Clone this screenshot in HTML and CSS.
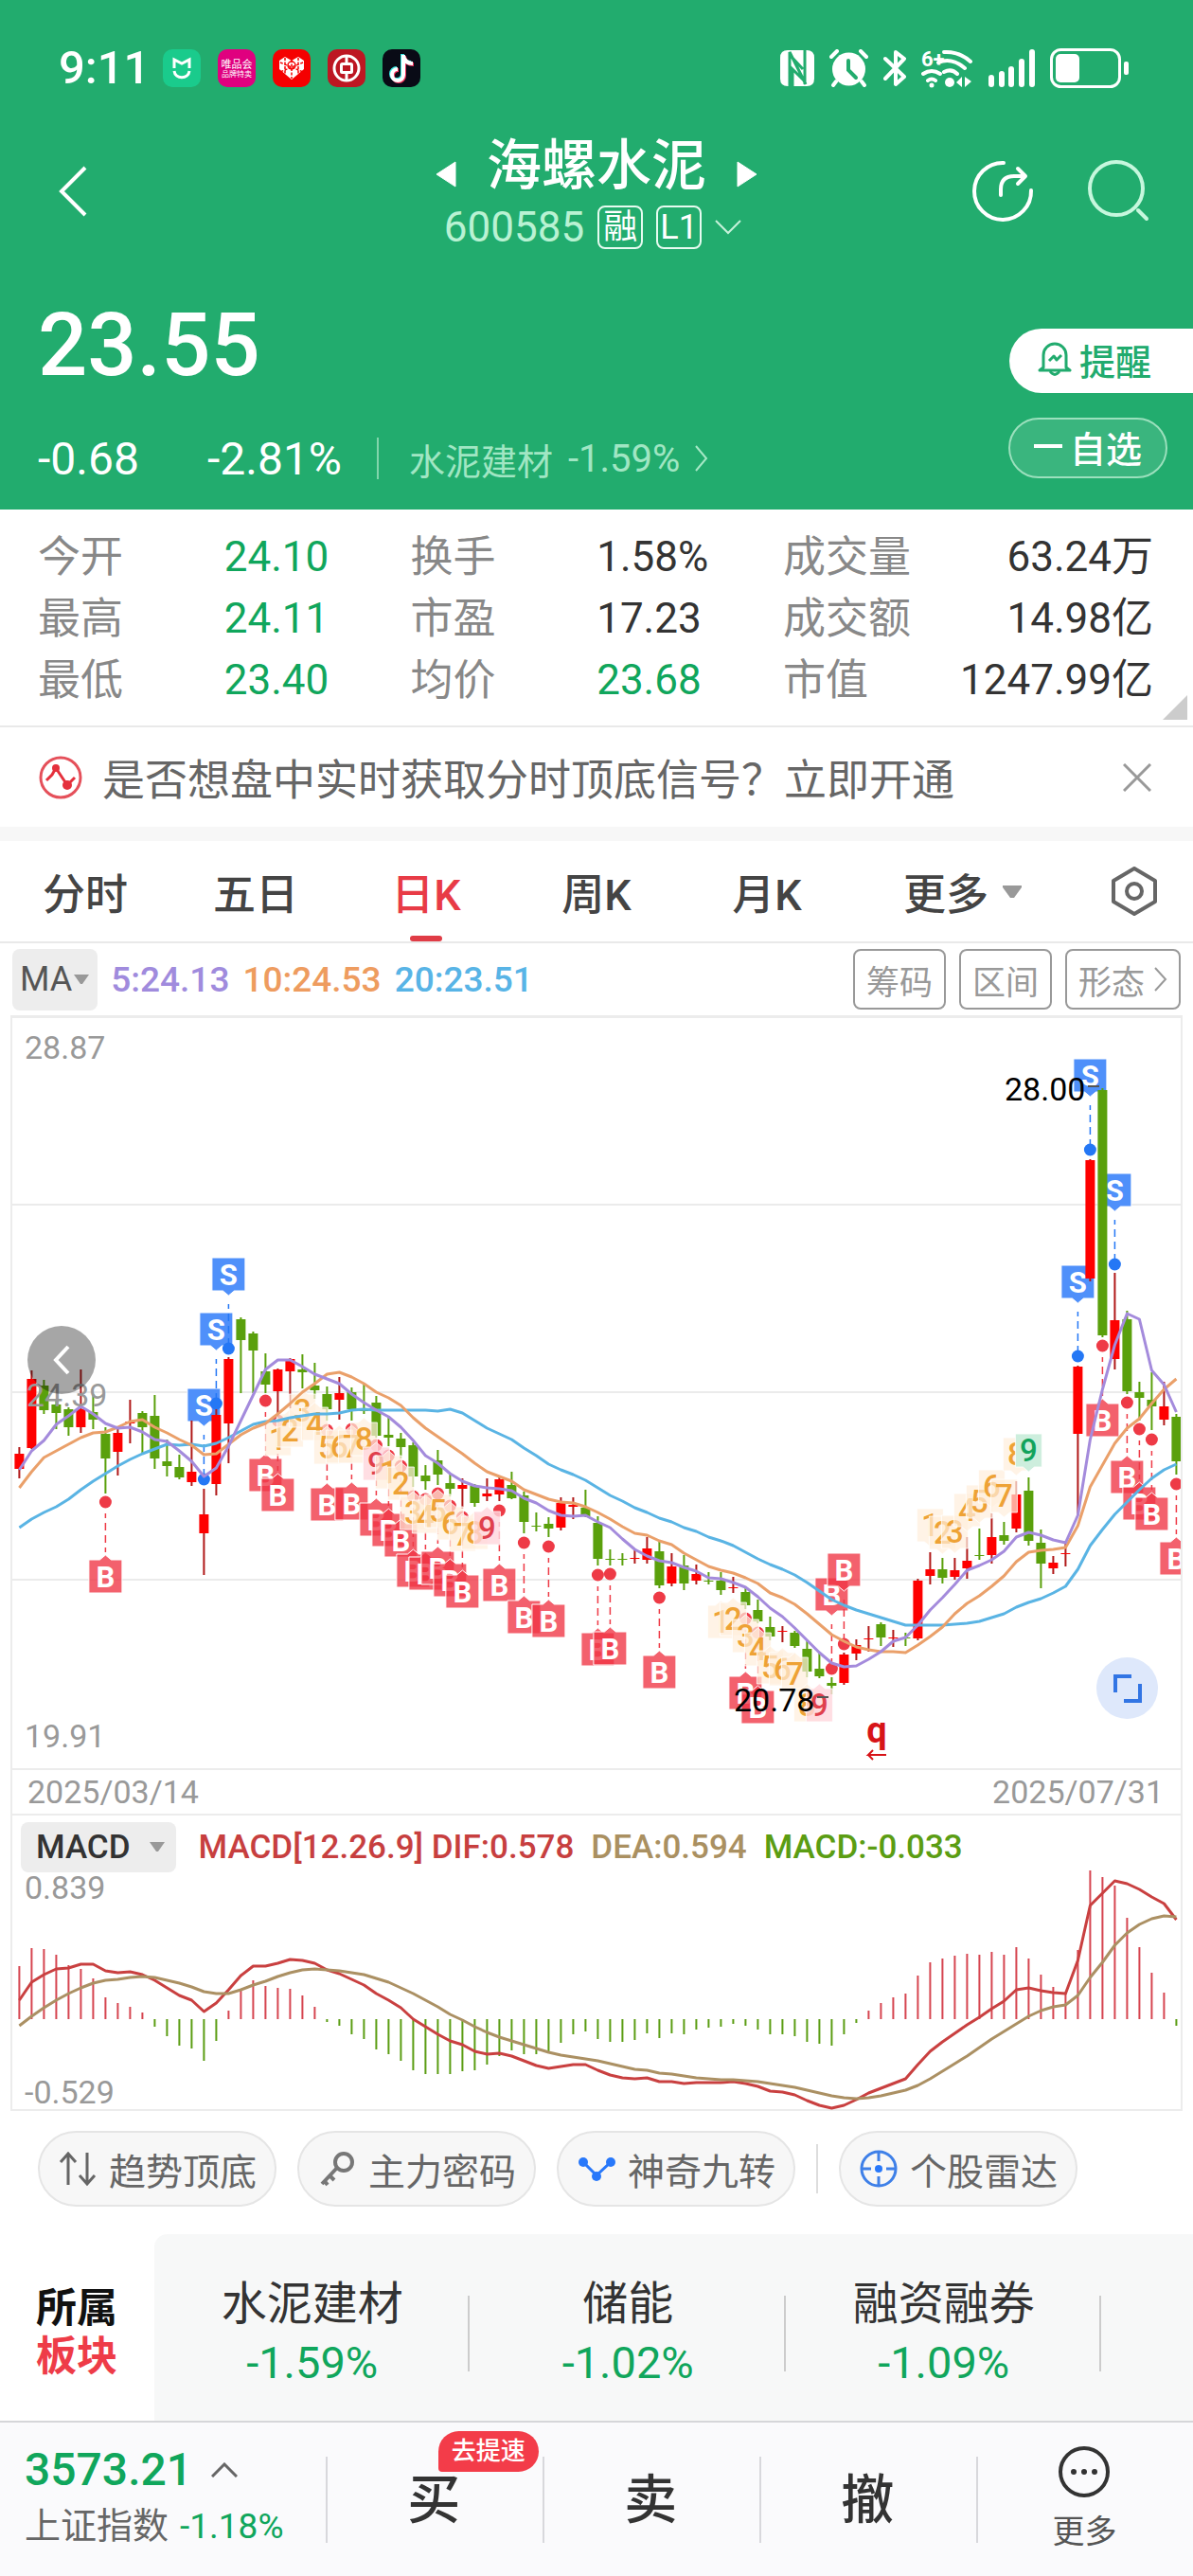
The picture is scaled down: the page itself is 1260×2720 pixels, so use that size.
FILE: index.html
```
<!DOCTYPE html>
<html lang="zh-CN">
<head>
	<meta charset="UTF-8">
	<meta name="viewport" content="width=device-width,initial-scale=1.0">
	<title>海螺水泥 600585</title>
	<link rel="stylesheet" href="styles.css">
</head>
<body>
	<header class="top">
		<div class="status">
			<span class="clock">9:11</span>
			<div class="apps">
				<svg class="app" viewBox="0 0 40 40"><rect width="40" height="40" rx="10" fill="#1acb8c"/><path d="M12 20V11l8 4 8-4v9M12 23c1 9 15 9 16 0" fill="none" stroke="#fff" stroke-width="3"/></svg>
				<svg class="app" viewBox="0 0 40 40"><rect width="40" height="40" rx="10" fill="#e0007f"/><text x="20" y="20" class="app-t1">唯品会</text><text x="20" y="29" class="app-t2">品牌特卖</text></svg>
				<svg class="app" viewBox="0 0 40 40"><rect width="40" height="40" rx="10" fill="#f50000"/><path d="M20 32L7 21V12l6-4 7 4 7-4 6 4v9z" fill="#fff"/><path d="M20 11v20M8 14l24 10M32 14L8 24M13 9v17M27 9v17" stroke="#f50000" stroke-width="1.5" stroke-dasharray="3 1.5"/><circle cx="20" cy="17" r="4" fill="none" stroke="#f50000" stroke-width="1.5"/></svg>
				<svg class="app" viewBox="0 0 40 40"><rect width="40" height="40" rx="10" fill="#bd1622"/><circle cx="20" cy="20" r="13" fill="none" stroke="#fff" stroke-width="3"/><rect x="14.500" y="15.500" width="11" height="9" rx="1" fill="none" stroke="#fff" stroke-width="3"/><path d="M20 7v8M20 25v8" stroke="#fff" stroke-width="3"/></svg>
				<svg class="app" viewBox="0 0 40 40"><rect width="40" height="40" rx="10" fill="#090b16"/><path d="M21 5v21a6 6 0 1 1-6-6M21 6c1 5 4 8 9 8" fill="none" stroke="#3be8e4" stroke-width="4"/><path d="M23 7v21a6 6 0 1 1-6-6M23 8c1 5 4 8 10 8" fill="none" stroke="#f0305a" stroke-width="4"/><path d="M22 6v21a6 6 0 1 1-6-6M22 7c1 5 4 8 10 8" fill="none" stroke="#fff" stroke-width="4"/></svg>
			</div>
			<div class="signals">
				<svg width="36" height="38" viewBox="0 0 36 38"><path d="M8 0h20q8 0 8 8v22q0 8-8 8H8q-8 0-8-8V8q0-8 8-8z" fill="#fff"/><path d="M10 38V2l17 34M26 0v36M13 38V20l13 13M24 20L11 6" fill="none" stroke="#22ac6e" stroke-width="3"/></svg>
				<svg width="41" height="40" viewBox="0 0 41 40"><circle cx="20.500" cy="21" r="17.500" fill="#fff"/><path d="M7 34l-3 4M34 34l3 4M2 8l6-6M39 8l-6-6" stroke="#fff" stroke-width="4" stroke-linecap="round"/><path d="M20 12v10l8 8" fill="none" stroke="#22ac6e" stroke-width="4" stroke-linecap="round"/></svg>
				<svg width="24" height="40" viewBox="0 0 24 40"><path d="M2 10l20 19-9 8V3l9 7L2 31" fill="none" stroke="#fff" stroke-width="4" stroke-linejoin="round" stroke-linecap="round"/></svg>
				<svg width="55" height="42" viewBox="0 0 55 42"><text x="0" y="19" class="wifi-gen">6+</text><g fill="none" stroke="#fff" stroke-width="4" stroke-linecap="round"><path d="M24 4q16-1 28 10M18 15q14-6 28 6M2 27q9-6 18 0M24 25q8-4 14 2M7 34q4-3 8 0"/></g><g fill="#fff"><circle cx="11" cy="39" r="2.500"/><circle cx="30" cy="36" r="5"/><path d="M37 36l6-6v11zM46 30l7 5-7 6z"/></g></svg>
				<svg width="49" height="40" viewBox="0 0 49 40"><path d="M3 30v7M14 26v11M24 21v16M35 13v24M46 3v34" stroke="#fff" stroke-width="6" stroke-linecap="round"/></svg>
				<svg width="83" height="42" viewBox="0 0 83 42"><rect x="1.500" y="1.500" width="72" height="39" rx="10" fill="none" stroke="#fff" stroke-width="3"/><rect x="6" y="6" width="25" height="30" rx="5" fill="#fff"/><rect x="78" y="14" width="5" height="14" rx="2" fill="#fff"/></svg>
			</div>
		</div>

		<nav class="nav">
			<button class="icon-btn back" aria-label="返回"><svg width="30" height="54" viewBox="0 0 30 54"><path d="M28 2L3 27l25 25" fill="none" stroke="#fff" stroke-width="4"/></svg></button>
			<div class="title">
				<div class="name-row">
					<button class="icon-btn" aria-label="上一只"><svg width="22" height="30" viewBox="0 0 22 30"><path d="M21 2v26L1 15z" fill="#fff" stroke="#fff" stroke-linejoin="round"/></svg></button>
					<h1>海螺水泥</h1>
					<button class="icon-btn" aria-label="下一只"><svg width="22" height="30" viewBox="0 0 22 30"><path d="M1 2v26l20-13z" fill="#fff" stroke="#fff" stroke-linejoin="round"/></svg></button>
				</div>
				<div class="code-row">
					<span class="code">600585</span>
					<span class="tag">融</span>
					<span class="tag">L1</span>
					<svg width="28" height="16" viewBox="0 0 28 16"><path d="M1 1l13 13L27 1" fill="none" stroke="#c6f2da" stroke-width="2"/></svg>
				</div>
			</div>
			<div class="nav-right">
				<button class="icon-btn" aria-label="分享"><svg width="66" height="66" viewBox="0 0 66 66"><g fill="none" stroke="#fff" stroke-width="4" stroke-linecap="round" stroke-linejoin="round"><path d="M34 3a30 30 0 1 0 29 29"/><path d="M31 37v-6q0-14 14-14h11M49 9l8 8-8 8"/></g></svg></button>
				<button class="icon-btn" aria-label="搜索"><svg width="66" height="66" viewBox="0 0 66 66"><g fill="none" stroke="#c6f7dd" stroke-width="4" stroke-linecap="round"><circle cx="31" cy="30" r="28"/><path d="M54 53l9 9"/></g></svg></button>
			</div>
		</nav>

		<div class="quote">
			<div>
				<div class="price">23.55</div>
				<div class="change">
					<span class="diff">-0.68</span>
					<span class="pct">-2.81%</span>
					<a class="industry" href="#">水泥建材 <span>-1.59%</span><svg width="14" height="28" viewBox="0 0 14 28"><path d="M1 1l11 13L1 27" fill="none" stroke="#a6e8c6" stroke-width="2"/></svg></a>
				</div>
			</div>
			<div class="actions">
				<button class="remind"><svg width="36" height="38" viewBox="0 0 36 38"><g fill="none" stroke="#21ab6e" stroke-width="3" stroke-linejoin="round"><path d="M6 28V15a12 12 0 0 1 24 0v13l4 3H2z"/><path d="M13 32q5 7 10 0M12 21l5-5 3 4 5-5"/></g></svg>提醒</button>
				<button class="fav"><i></i>自选</button>
			</div>
		</div>
	</header>

	<section class="stats">
		<table>
			<tr><th>今开</th><td class="down">24.10</td><th>换手</th><td>1.58%</td><th>成交量</th><td>63.24万</td></tr>
			<tr><th>最高</th><td class="down">24.11</td><th>市盈</th><td>17.23</td><th>成交额</th><td>14.98亿</td></tr>
			<tr><th>最低</th><td class="down">23.40</td><th>均价</th><td class="down">23.68</td><th>市值</th><td>1247.99亿</td></tr>
		</table>
	</section>

	<div class="notice">
		<svg width="48" height="48" viewBox="0 0 48 48"><circle cx="24" cy="24" r="21" fill="none" stroke="#e5505a" stroke-width="3"/><path d="M9 27l6-6 4-7 12 18 8-8" fill="none" stroke="#e5303c" stroke-width="3"/><circle cx="19" cy="14" r="4" fill="#e5303c"/><circle cx="31" cy="32" r="5" fill="#e5303c"/></svg>
		<a href="#">是否想盘中实时获取分时顶底信号？立即开通</a>
		<button class="icon-btn" aria-label="关闭"><svg width="30" height="30" viewBox="0 0 30 30"><path d="M1 1l28 28M29 1L1 29" stroke="#999" stroke-width="3"/></svg></button>
	</div>

	<div class="tabs">
		<button>分时</button>
		<button>五日</button>
		<button class="on">日K</button>
		<button>周K</button>
		<button>月K</button>
		<button>更多<svg width="22" height="15" viewBox="0 0 22 15"><path d="M1 1h20v2L13 14h-4L1 3z" fill="#999"/></svg></button>
		<button aria-label="设置"><svg width="50" height="52" viewBox="0 0 50 52"><g fill="none" stroke="#666" stroke-width="4" stroke-linejoin="round"><path d="M25 2l22 13v22L25 50 3 37V15z"/><circle cx="25" cy="26" r="8"/></g></svg></button>
	</div>

	<div class="ma-bar">
		<button class="pick">MA<svg width="16" height="10" viewBox="0 0 16 10"><path d="M0 0h16L9 10H7z" fill="#999"/></svg></button>
		<span class="ma5">5:24.13</span>
		<span class="ma10">10:24.53</span>
		<span class="ma20">20:23.51</span>
		<div class="tools">
			<button>筹码</button>
			<button>区间</button>
			<button>形态<svg width="14" height="28" viewBox="0 0 14 28"><path d="M1 2l11 12L1 26" fill="none" stroke="#999" stroke-width="2"/></svg></button>
		</div>
	</div>

	<main class="charts">
		<div class="kline">
			<svg id="kline" viewBox="13 1075 1234 792"></svg>
			<button class="fold" aria-label="收起"><svg width="18" height="32" viewBox="0 0 18 32"><path d="M16 2L3 16l13 14" fill="none" stroke="#fff" stroke-width="4"/></svg></button>
			<button class="full" aria-label="全屏"><svg width="32" height="32" viewBox="0 0 32 32"><path d="M3 20V3h17M29 11v18H12" fill="none" stroke="#3275e4" stroke-width="4"/></svg></button>
		</div>
		<div class="dates"><span>2025/03/14</span><span>2025/07/31</span></div>
		<div class="macd-bar">
			<button class="pick">MACD<svg width="16" height="10" viewBox="0 0 16 10"><path d="M0 0h16L9 10H7z" fill="#999"/></svg></button>
			<span class="dif">MACD[12.26.9] DIF:0.578</span>
			<span class="dea">DEA:0.594</span>
			<span class="bar">MACD:-0.033</span>
		</div>
		<svg id="macd" viewBox="13 1977 1234 250"></svg>
	</main>

	<div class="chips">
		<button><svg width="40" height="38" viewBox="0 0 40 38"><path d="M10 36V3M2 12l8-9 8 9M30 2v33M22 26l8 9 8-9" fill="none" stroke="#666" stroke-width="3"/></svg>趋势顶底</button>
		<button><svg width="40" height="38" viewBox="0 0 40 38"><g fill="none" stroke="#777" stroke-width="4"><circle cx="27" cy="12" r="9"/><path d="M20 18L4 35M12 26l5 5M6 31l4 5"/></g></svg>主力密码</button>
		<button><svg width="40" height="38" viewBox="0 0 40 38"><path d="M6 12l14 14L35 12" fill="none" stroke="#2878fa" stroke-width="3"/><g fill="#2878fa"><circle cx="6" cy="12" r="5"/><circle cx="20" cy="27" r="5"/><circle cx="35" cy="12" r="5"/></g></svg>神奇九转</button>
		<i></i>
		<button><svg width="40" height="40" viewBox="0 0 40 40"><circle cx="20" cy="20" r="18" fill="none" stroke="#3f80e8" stroke-width="3"/><path d="M20 2v10M20 28v10M2 20h10M28 20h10" stroke="#3f80e8" stroke-width="3"/><circle cx="20" cy="20" r="4" fill="#2878fa"/></svg>个股雷达</button>
	</div>

	<section class="sectors">
		<h2>所属<br><em>板块</em></h2>
		<div class="list">
			<a href="#">水泥建材<b>-1.59%</b></a>
			<a href="#">储能<b>-1.02%</b></a>
			<a href="#">融资融券<b>-1.09%</b></a>
		</div>
	</section>

	<footer class="bottom">
		<div class="index">
			<div class="idx-val">3573.21<svg width="28" height="16" viewBox="0 0 28 16"><path d="M1 15L14 2l13 13" fill="none" stroke="#666" stroke-width="3"/></svg></div>
			<div class="idx-name">上证指数<span>-1.18%</span></div>
		</div>
		<button>买<span class="badge">去提速</span></button>
		<button>卖</button>
		<button>撤</button>
		<button class="more"><svg width="56" height="56" viewBox="0 0 56 56"><circle cx="28" cy="28" r="25" fill="none" stroke="#333" stroke-width="4"/><g fill="#333"><circle cx="17" cy="28" r="3"/><circle cx="28" cy="28" r="3"/><circle cx="39" cy="28" r="3"/></g></svg>更多</button>
	</footer>
	<script src="chart.js"></script>
</body>
</html>
```
FILE: styles.css
```
*{padding:0;margin:0;box-sizing:border-box;}
body{font-family:Roboto,"Noto Sans CJK SC",sans-serif;font-size:38px;color:#333;background:#fff;}
button{font:inherit;color:inherit;background:none;border:0;}
a{color:inherit;text-decoration:none;}
svg{display:block;flex:none;}
.down{color:#10a65c;}
.icon-btn{display:flex;}

.top{background:#22ac6e;color:#fff;padding-bottom:26px;}
.status{display:flex;align-items:center;padding:48px 68px 0 62px;height:96px;}
.clock{font-size:49px;font-weight:500;line-height:48px;}
.apps{display:flex;gap:18px;margin-left:14px;}
.app{width:40px;height:40px;}
.app-t1{font-size:11px;fill:#fff;text-anchor:middle;}
.app-t2{font-size:8px;fill:#fff;text-anchor:middle;}
.wifi-gen{font-size:22px;font-weight:bold;fill:#fff;}
.signals{display:flex;align-items:center;gap:16px;margin-left:auto;}

.nav{display:grid;grid-template-columns:1fr auto 1fr;align-items:center;padding:46px 46px 0;}
.nav>.icon-btn,.nav-right{padding-bottom:10px;}
.back{padding-left:16px;}
.name-row,.code-row{display:flex;align-items:center;justify-content:center;}
.name-row{gap:32px;}
.name-row .icon-btn{padding-top:18px;}
h1{font-size:58px;font-weight:500;line-height:66px;}
.code-row{gap:14px;height:64px;padding-right:8px;}
.code{font-size:44px;color:#b9f2d3;}
.tag{width:48px;height:46px;border:2px solid #e6fbf0;border-radius:8px;font-size:36px;line-height:42px;text-align:center;}
.nav-right{display:flex;justify-content:flex-end;gap:56px;}

.quote{display:flex;justify-content:space-between;padding:43px 0 0 40px;}
.price{font-size:92px;font-weight:500;line-height:100px;}
.change{display:flex;align-items:center;height:56px;margin-top:41px;font-size:48px;}
.diff{width:179px;}
.pct{width:179px;}
.industry{display:flex;align-items:center;gap:16px;height:44px;padding-left:32px;border-left:2px solid #82d5ac;font-size:38px;color:#a0e6c3;}
.industry span{font-size:40px;}
.actions{display:flex;flex-direction:column;align-items:flex-end;padding-top:32px;gap:26px;}
.remind{display:flex;align-items:center;gap:8px;width:194px;height:68px;padding:0 0 4px 30px;border-radius:34px 0 0 34px;background:#fff;color:#21ab6e;font-weight:500;}
.fav{display:flex;align-items:center;justify-content:center;gap:8px;width:168px;height:64px;margin-right:27px;padding-bottom:4px;border:2px solid #9be0bd;border-radius:32px;background:#3ab57e;font-weight:500;}
.fav i{width:30px;height:4px;background:#fff;}

.stats{position:relative;padding:18px 42px 15px 40px;border-bottom:2px solid #e9e9e9;}
.stats table{width:100%;table-layout:fixed;border-collapse:collapse;}
.stats th,.stats td{width:16.7%;font-weight:400;line-height:65px;text-align:left;white-space:nowrap;}
.stats th{font-size:45px;color:#888;}
.stats td{font-size:44px;}
.stats th:nth-child(5){width:13.2%;}
.stats td:last-child{width:20%;text-align:right;}
.stats:after{content:"";position:absolute;right:6px;bottom:6px;border-left:26px solid transparent;border-bottom:26px solid #ccc;}

.notice{display:flex;align-items:center;gap:20px;height:120px;padding:0 44px 0 40px;border-bottom:15px solid #f7f7f7;font-size:45px;color:#666;}
.notice .icon-btn{margin-left:auto;}

.tabs{display:grid;grid-template-columns:10fr 10fr 10fr 10fr 10fr 13fr 7fr;height:108px;border-bottom:2px solid #e9e9e9;}
.tabs button{position:relative;display:flex;align-items:center;justify-content:center;gap:14px;font-size:45px;font-weight:500;color:#444;white-space:nowrap;}
.tabs button:last-child{justify-content:flex-end;padding-right:37px;}
.tabs .on{color:#e83b46;}
.tabs .on:after{content:"";position:absolute;bottom:0;left:50%;width:34px;height:6px;margin-left:-17px;border-radius:3px;background:#e03c46;}

.ma-bar{display:flex;align-items:center;gap:14px;height:76px;padding:0 13px;font-size:37px;}
.pick{display:flex;align-items:center;gap:2px;border-radius:8px;background:#ededed;}
.ma-bar .pick{height:65px;padding:0 9px 0 8px;font-size:36px;color:#555;}
.ma-bar span{font-weight:500;}
.ma5{color:#a08bdd;}
.ma10{color:#ee9c5f;}
.ma20{color:#58b4e6;}
.tools{display:flex;gap:14px;margin-left:auto;}
.tools button{display:flex;align-items:center;gap:10px;height:64px;padding:0 12px;border:2px solid #999;border-radius:8px;font-size:35px;color:#999;}

.charts{margin:0 11px;border:2px solid #ececec;border-top-width:3px;}
.charts>svg{width:100%;overflow:visible;}
.kline{position:relative;}
.kline>svg{width:100%;}
.fold,.full{position:absolute;display:flex;align-items:center;justify-content:center;border-radius:50%;}
.fold{left:16px;top:41%;width:72px;height:72px;background:rgba(0,0,0,.35);}
.full{right:24px;bottom:52px;width:65px;height:65px;background:#dee8fb;}
.dates{display:flex;justify-content:space-between;padding:0 18px 0 16px;border-top:2px solid #ececec;border-bottom:2px solid #ececec;font-size:34px;line-height:46px;color:#999;}
.macd-bar{display:flex;align-items:center;gap:18px;height:60px;padding:6px 0 0 9px;font-size:35px;font-weight:500;}
.macd-bar .pick{gap:20px;height:53px;margin-right:6px;padding:0 12px 0 16px;color:#333;}
.dif{color:#c73f3f;}
.dea{color:#aa9061;}
.bar{color:#5b9d13;}

/* chart drawing */
.axis{font-size:34px;fill:#999;}
.peak{font-size:34px;fill:#000;}
.grid{stroke:#ebebeb;stroke-width:2;}
.line{fill:none;stroke-width:3;stroke-linejoin:round;}
.sign{font-size:31px;font-weight:bold;fill:#fff;text-anchor:middle;}
.num{font-size:33px;font-weight:500;text-anchor:middle;}
.ex{font-size:38px;font-weight:bold;fill:#d71418;text-anchor:middle;}

.chips{display:flex;align-items:center;gap:22px;height:130px;padding:0 40px 8px;}
.chips button{display:flex;align-items:center;gap:13px;height:80px;padding:0 19px 0 20px;border:2px solid #e5e5e5;border-radius:40px;background:#f7f7f7;font-size:39px;color:#666;}
.chips i{width:2px;height:52px;background:#ddd;}

.sectors{display:flex;height:197px;}
.sectors h2{width:163px;padding:53px 0 0 38px;font-size:43px;line-height:51px;color:#111;}
.sectors em{font-style:normal;color:#ee3c48;}
.list{flex:1;display:flex;align-items:center;padding-top:12px;border-radius:14px 0 0 0;background:#f7f8f8;}
.list a{position:relative;width:30.4%;font-size:48px;line-height:62px;text-align:center;}
.list a:after{content:"";position:absolute;right:0;top:22px;bottom:22px;width:2px;background:#ccc;}
.list b{display:block;font-size:47px;font-weight:400;color:#10a65c;}

.bottom{display:grid;grid-template-columns:3fr 2fr 2fr 2fr 2fr;height:164px;border-top:2px solid #d5d6d9;background:#fafafc;}
.bottom button{position:relative;font-size:56px;font-weight:500;line-height:164px;}
.bottom button:before{content:"";position:absolute;left:0;top:36px;width:2px;height:91px;background:#d8d8dc;}
.index{padding:20px 0 0 26px;white-space:nowrap;}
.idx-val{display:flex;align-items:center;gap:20px;font-size:48px;font-weight:500;line-height:60px;color:#10a65c;}
.idx-name{line-height:58px;color:#666;}
.idx-name span{margin-left:12px;font-size:37px;color:#10a65c;}
.badge{position:absolute;left:52%;top:9px;padding:0 14px;border-radius:22px 22px 22px 4px;background:#f33c49;color:#fff;font-size:26px;line-height:43px;}
.bottom .more{display:flex;flex-direction:column;align-items:center;gap:12px;padding-top:24px;font-size:34px;font-weight:400;line-height:46px;color:#555;}
```
FILE: chart.js
```
// one column per trading day
var X0 = 20.4, STEP = 13;
function px(i) { return X0 + STEP * i; }

// high, body top, body bottom, low, 1 = up (red) / 0 = down (green)
var candles = [
[1528,1535,1551,1561,1],[1447,1456,1529,1530,1],[1457,1463,1489,1493,0],[1478,1483,1492,1509,0],[1486,1488,1507,1516,0],
[1446,1488,1507,1513,1],[1472,1491,1499,1509,0],[1507,1514,1540,1577,0],[1508,1513,1533,1558,1],[1478,1501,1503,1524,1],
[1490,1492,1507,1535,0],[1473,1495,1540,1551,0],[1520,1543,1548,1559,0],[1536,1549,1560,1562,0],[1500,1554,1565,1569,1],
[1572,1599,1619,1663,1],[1488,1494,1567,1579,1],[1433,1435,1503,1545,1],[1391,1393,1415,1471,0],[1406,1408,1426,1471,0],
[1429,1448,1462,1471,0],[1445,1446,1469,1500,1],[1434,1435,1448,1487,1],[1430,1446,1449,1466,0],[1439,1463,1468,1477,0],
[1464,1472,1488,1500,0],[1454,1471,1478,1499,1],[1465,1470,1488,1500,0],[1462,1488,1490,1493,0],[1474,1481,1516,1518,0],
[1495,1515,1518,1527,0],[1513,1519,1528,1540,0],[1523,1526,1559,1570,0],[1547,1558,1564,1573,0],[1531,1542,1557,1568,0],
[1557,1566,1572,1580,0],[1561,1568,1572,1593,1],[1567,1569,1587,1591,0],[1561,1577,1580,1585,1],[1560,1562,1578,1585,1],
[1554,1568,1582,1583,0],[1575,1579,1607,1619,0],[1597,1611,1612,1617,0],[1602,1609,1614,1623,0],[1581,1587,1613,1616,1],
[1581,1589,1591,1604,1],[1573,1592,1601,1602,0],[1601,1608,1646,1653,0],[1636,1646,1647,1653,0],[1640,1646,1647,1653,0],
[1637,1645,1646,1651,1],[1623,1635,1647,1651,1],[1628,1638,1674,1677,0],[1640,1654,1672,1675,1],[1642,1653,1672,1679,0],
[1652,1662,1669,1673,1],[1660,1669,1670,1673,0],[1660,1669,1679,1684,0],[1665,1676,1677,1682,1],[1677,1681,1695,1699,0],
[1689,1700,1712,1714,0],[1707,1718,1728,1732,0],[1717,1722,1723,1734,1],[1722,1724,1738,1740,0],[1733,1741,1765,1771,0],
[1746,1762,1770,1772,0],[1771,1777,1780,1789,0],[1745,1747,1777,1779,1],[1731,1737,1746,1753,1],[1717,1730,1731,1744,1],
[1713,1715,1729,1738,0],[1721,1729,1730,1739,1],[1724,1729,1730,1738,0],[1667,1669,1730,1732,1],[1639,1657,1664,1673,1],
[1645,1657,1666,1672,0],[1645,1658,1665,1668,1],[1623,1648,1656,1667,1],[1614,1642,1643,1647,0],[1598,1623,1642,1651,1],
[1607,1621,1627,1631,0],[1564,1578,1614,1618,1],[1560,1574,1627,1632,0],[1615,1629,1651,1677,0],[1643,1650,1656,1662,1],
[1630,1640,1641,1654,1],[1442,1443,1514,1600,1],[1224,1225,1350,1353,1],[1149,1151,1410,1412,0],[1344,1394,1435,1446,1],
[1384,1393,1469,1472,0],[1459,1470,1476,1500,0],[1449,1478,1485,1510,0],[1459,1485,1499,1505,1],[1493,1496,1543,1557,0]];

var ma5 = [1552,1532,1521,1504,1495,1485,1493,1503,1508,1507,1512,1520,1522,1532,1543,1559,1550,1527,1500,1473,1446,1436,1436,1443,1451,1456,1461,1472,1481,1489,1496,1507,1521,1537,1545,1556,1564,1569,1571,1572,1574,1582,1587,1595,1600,1601,1600,1607,1613,1625,1636,1643,1648,1650,1655,1659,1666,1667,1671,1676,1686,1698,1707,1719,1732,1745,1756,1760,1759,1752,1744,1733,1729,1716,1700,1687,1673,1658,1653,1647,1638,1623,1618,1621,1626,1629,1600,1520,1467,1420,1387,1393,1447,1462,1491];
var ma10 = [1571,1554,1539,1532,1525,1518,1513,1512,1507,1501,1499,1507,1513,1520,1526,1536,1535,1525,1515,1508,1503,1493,1482,1470,1461,1451,1449,1454,1461,1470,1476,1484,1497,1508,1517,1526,1535,1545,1554,1559,1564,1573,1578,1583,1586,1587,1591,1597,1604,1612,1619,1621,1627,1631,1640,1647,1654,1658,1661,1666,1672,1682,1687,1694,1704,1715,1726,1733,1739,1742,1744,1744,1745,1737,1728,1718,1704,1693,1685,1675,1664,1649,1639,1637,1636,1634,1611,1570,1547,1524,1508,1498,1482,1467,1456];
var ma20 = [1613,1604,1597,1591,1583,1573,1564,1556,1548,1541,1535,1530,1525,1526,1525,1527,1524,1518,1511,1504,1501,1500,1497,1495,1493,1493,1492,1489,1488,1489,1489,1489,1489,1489,1490,1488,1492,1500,1508,1514,1520,1529,1537,1546,1552,1557,1563,1571,1579,1585,1592,1597,1603,1607,1613,1617,1623,1627,1632,1639,1646,1652,1657,1663,1671,1680,1689,1695,1700,1704,1708,1712,1716,1716,1716,1716,1715,1714,1712,1708,1704,1697,1692,1688,1682,1675,1657,1632,1615,1599,1586,1573,1561,1552,1546];

// day, dot y
var sells = [[15,1562],[16,1482],[17,1424],[86,1432],[87,1214],[89,1335]];
var buys = [[7,1586],[20,1479],[21,1500],[25,1510],[27,1509],[29,1526],[30,1537],[31,1548],[32,1580],[33,1583],[34,1577],[35,1590],[36,1602],[39,1595],[41,1629],[43,1633],[47,1663],[48,1662],[52,1687],[59,1709],[60,1724],[88,1421],[90,1481],[91,1509],[92,1520],[94,1567]];
var buysTop = [[66,1762],[67,1736]];

// nine-turn counts: day, digit, box top
var turnsLow = [[21,1,1502],[22,2,1493],[23,3,1472],[24,4,1486],[25,5,1511],[26,6,1510],[27,7,1510],[28,8,1502],[29,9,1528],[30,1,1537],[31,2,1549],[32,3,1580],[33,4,1584],[34,5,1578],[35,6,1591],[36,7,1603],[37,8,1601],[38,9,1596],[57,1,1695],[58,2,1692],[59,3,1710],[60,4,1724],[61,5,1743],[62,6,1745],[63,7,1750],[64,8,1783],[65,9,1783]];
var turnsHigh = [[74,1,1593],[75,2,1601],[76,3,1600],[77,4,1577],[78,5,1568],[79,6,1552],[80,7,1562],[81,8,1518],[82,9,1514]];

var hist = [2076,2057,2058,2064,2075,2079,2089,2109,2115,2119,2125,2140,2150,2160,2163,2176,2155,2123,2100,2091,2097,2099,2100,2107,2119,2135,2139,2148,2153,2164,2169,2176,2186,2190,2190,2190,2187,2186,2180,2171,2165,2169,2169,2167,2157,2148,2145,2153,2156,2156,2154,2147,2152,2147,2148,2143,2141,2140,2137,2139,2143,2148,2148,2150,2156,2158,2160,2148,2136,2123,2115,2109,2105,2086,2072,2068,2065,2063,2064,2061,2064,2056,2068,2085,2098,2105,2059,1975,1982,1991,2025,2056,2083,2104,2139];
var dif = [2112,2093,2085,2079,2078,2074,2074,2081,2083,2082,2085,2091,2099,2107,2112,2124,2115,2101,2086,2076,2076,2073,2069,2070,2073,2080,2084,2090,2096,2105,2112,2120,2132,2140,2148,2155,2159,2166,2169,2168,2171,2176,2181,2184,2182,2180,2180,2186,2191,2194,2195,2194,2198,2198,2200,2199,2199,2199,2198,2200,2203,2208,2209,2212,2218,2223,2226,2223,2217,2210,2205,2200,2195,2180,2166,2156,2147,2138,2130,2121,2113,2101,2099,2102,2104,2105,2070,2012,1999,1986,1989,1995,2003,2010,2027];
var dea = [2139,2129,2120,2112,2105,2099,2094,2091,2090,2088,2087,2088,2091,2094,2098,2103,2105,2105,2101,2096,2092,2087,2083,2080,2079,2080,2081,2083,2085,2089,2093,2099,2105,2112,2119,2127,2133,2140,2146,2151,2155,2159,2163,2167,2170,2172,2174,2176,2179,2182,2185,2186,2189,2190,2192,2194,2195,2196,2196,2197,2198,2200,2202,2204,2207,2210,2213,2215,2216,2215,2213,2210,2207,2202,2195,2187,2179,2171,2162,2153,2145,2137,2129,2123,2119,2117,2107,2088,2072,2054,2041,2032,2026,2023,2024];

function line(arr, color) {
	return '<polyline class="line" stroke="' + color + '" points="' + arr.map(function (y, i) { return px(i) + ',' + y; }).join(' ') + '"/>';
}
function text(x, y, cls, s, extra) {
	return '<text x="' + x + '" y="' + y + '" class="' + cls + '" ' + (extra || '') + '>' + s + '</text>';
}
// box with its pointer at the bottom (down) or at the top
function flag(x, top, w, h, down, fill, stroke) {
	var l = x - w / 2, r = x + w / 2, b = top + h;
	var d = down ? 'M' + l + ' ' + top + 'H' + r + 'V' + b + 'H' + (x + 6) + 'L' + x + ' ' + (b + 5) + 'L' + (x - 6) + ' ' + b + 'H' + l + 'z'
		: 'M' + l + ' ' + top + 'H' + (x - 6) + 'L' + x + ' ' + (top - 5) + 'L' + (x + 6) + ' ' + top + 'H' + r + 'V' + b + 'H' + l + 'z';
	return '<path d="' + d + '" fill="' + fill + '" stroke="' + stroke + '" stroke-linejoin="round"/>';
}
function mark(i, y, letter, above, box, ink) {
	var x = px(i), top = above ? y - 96 : y + 61;
	var y1 = above ? top + 49 : y + 12, y2 = above ? y - 6 : top - 8;
	return flag(x, top, 35, 35, above, box, '#fff') + text(x, top + 29, 'sign', letter)
		+ '<path d="M' + x + ' ' + y1 + 'V' + y2 + '" stroke="' + ink + '" stroke-width="1.5" stroke-dasharray="8 5" stroke-dashoffset="3"/>'
		+ '<circle cx="' + x + '" cy="' + y + '" r="6.5" fill="' + ink + '"/>';
}
function turn(t, above) {
	var fill = 'rgba(255,238,220,.7)', ink = '#eea236';
	if (t[1] == 9) {
		fill = above ? '#cdeedd' : 'rgba(255,214,220,.8)';
		ink = above ? '#12a35c' : '#e0404c';
	}
	return flag(px(t[0]), t[2], 28, 35, above, fill, 'rgba(255,255,255,.8)') + text(px(t[0]), t[2] + 29, 'num', t[1], 'fill="' + ink + '"');
}

var s = '';
[1272, 1470, 1668].forEach(function (y) { s += '<path class="grid" d="M13 ' + y + 'H1247"/>'; });
s += text(26, 1118, 'axis', '28.87') + text(26, 1845, 'axis', '19.91');
buys.forEach(function (b) { s += mark(b[0], b[1], 'B', false, 'rgba(240,52,68,.78)', '#ee3a46'); });
sells.forEach(function (b) { s += mark(b[0], b[1], 'S', true, '#4f90fa', '#2477f5'); });
candles.forEach(function (c, i) {
	var x = px(i), col = c[4] ? '#fe0000' : '#5aa00c', wick = c[4] ? '#b01818' : '#5aa00c';
	s += '<path d="M' + x + ' ' + c[0] + 'V' + c[3] + '" stroke="' + wick + '" stroke-width="2"/>'
		+ '<rect x="' + (x - 5) + '" y="' + c[1] + '" width="10" height="' + (c[2] - c[1]) + '" fill="' + col + '"/>';
});
turnsLow.forEach(function (t) { s += turn(t, false); });
turnsHigh.forEach(function (t) { s += turn(t, true); });
buysTop.forEach(function (b) { s += mark(b[0], b[1], 'B', true, 'rgba(240,52,68,.78)', '#ee3a46'); });
s += line(ma20, '#5ab4e4') + line(ma10, '#eaa06a') + line(ma5, '#a48bdc');
s += text(28, 1485, 'axis', '24.39');
s += text(1061, 1162, 'peak', '28.00') + '<path d="M1149 1147h12M863 1792h12" stroke="#555" stroke-width="2"/>' + text(775, 1807, 'peak', '20.78');
s += text(926, 1840, 'ex', 'q') + '<path d="M936 1853h-19l5-5M917 1853l5 5" fill="none" stroke="#d71418" stroke-width="2"/>';
document.getElementById('kline').innerHTML = s;

s = text(26, 2005, 'axis', '0.839') + text(26, 2221, 'axis', '-0.529');
hist.forEach(function (y, i) {
	s += '<path d="M' + px(i) + ' 2132V' + y + '" stroke="' + (y < 2132 ? '#d64550' : '#5b9d13') + '" stroke-width="2"/>';
});
s += line(dif, '#c94040') + line(dea, '#ab9063');
document.getElementById('macd').innerHTML = s;
```
